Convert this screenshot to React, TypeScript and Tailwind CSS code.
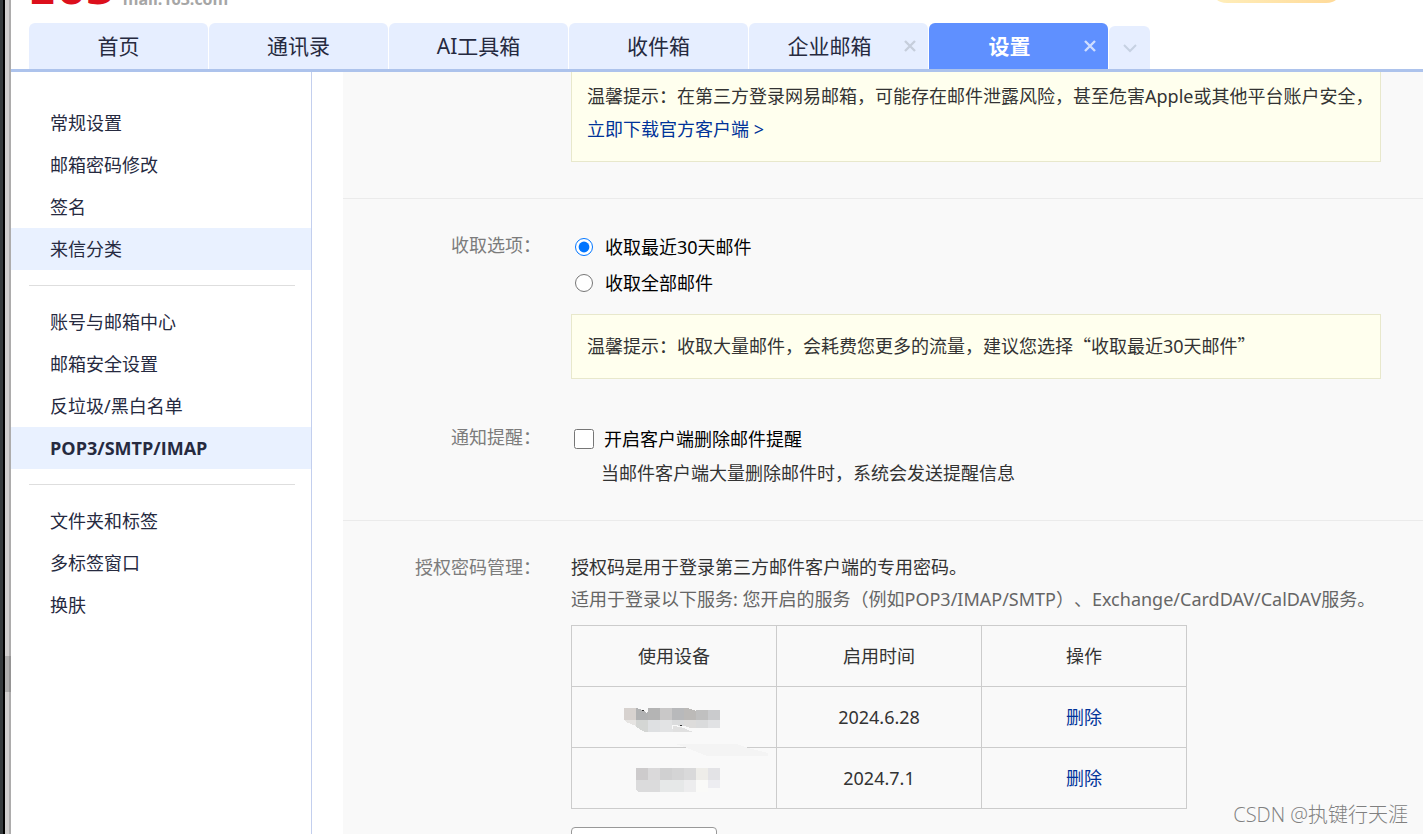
import type { ReactNode } from 'react';

type Tab = { name: string; closable?: boolean; active?: boolean };

const tabs: Tab[] = [
  { name: '首页' },
  { name: '通讯录' },
  { name: 'AI工具箱' },
  { name: '收件箱' },
  { name: '企业邮箱', closable: true },
  { name: '设置', closable: true, active: true },
];

const menu = [
  ['常规设置', '邮箱密码修改', '签名', '来信分类'],
  ['账号与邮箱中心', '邮箱安全设置', '反垃圾/黑白名单', 'POP3/SMTP/IMAP'],
  ['文件夹和标签', '多标签窗口', '换肤'],
];

function menuStyle(item: string) {
  if (item === 'POP3/SMTP/IMAP') return "bg-[#e9f1ff] font-['Open_Sans',sans-serif] font-bold";
  if (item === '来信分类') return 'bg-[#e9f1ff]';
  return '';
}

function TabItem({ tab }: { tab: Tab }) {
  return (
    <div
      className={`flex h-[46px] w-[179px] items-center rounded-t-md ${
        tab.active ? 'bg-[#5f90ff] font-bold text-white' : 'bg-[#e6eeff] text-[#262a3f]'
      }`}
    >
      <button type="button" className={`h-full flex-1 pt-px text-[21px] ${tab.closable ? 'pl-[6px]' : ''}`}>
        {tab.name}
      </button>
      {tab.closable && (
        <button
          type="button"
          aria-label="关闭"
          className={`mr-3 ${tab.active ? 'text-[#cfddff]' : 'text-[#c6cedc]'}`}
        >
          <svg width="12" height="12" viewBox="0 0 12 12" stroke="currentColor" strokeWidth="2.4">
            <path d="M1 1l10 10M11 1L1 11" />
          </svg>
        </button>
      )}
    </div>
  );
}

function Row({ label, children }: { label: string; children: ReactNode }) {
  return (
    <div className="flex gap-[30px] pr-[42px]">
      <div className="w-[198px] shrink-0 text-right leading-8 text-[#7c7c7c]">{label}</div>
      <div className="min-w-0 flex-1">{children}</div>
    </div>
  );
}

function Mosaic() {
  return (
    <svg className="inline-block overflow-visible" width="100" height="30" viewBox="0 0 100 30" shapeRendering="crispEdges">
      <path fill="#d7d2cf" d="M0 6h12v12H0z" />
      <path fill="#b1b2b3" d="M12 6l7 2 3 3 2-1v8H12z" />
      <path fill="#b4b4b4" d="M24 6h12v12H24z" />
      <path fill="#c9c8c8" d="M36 6h12v12H36z" />
      <path fill="#b8b9bb" d="M48 6h12v12H48z" />
      <path fill="#bcbab8" d="M60 6h4l8 3v9H60z" />
      <path fill="#c0c0c0" d="M72 8h12v10H72z" />
      <path fill="#cacbcd" d="M84 8h12v10H84z" />
      <path fill="#e6e4e2" d="M0 18h12v6L2 20z" />
      <path fill="#d4d6d4" d="M12 18h12v12h-3l-9-5z" />
      <path fill="#dee0e2" d="M24 18h12v12H24z" />
      <path fill="#e2e3e4" d="M36 18h12v5l1 7H36z" />
      <path fill="#e0e0e0" d="M49 24l8 1 12 5H49z" />
      <path fill="#dbdcdd" d="M48 18h12v6l-12-1z" />
      <path fill="#dddcdb" d="M60 18h12v8H66l-6-2z" />
      <path fill="#dadbdc" d="M72 18h12v8H72z" />
      <path fill="#e1e2e4" d="M84 18h12v8H84z" />
      <path fill="#333" d="M18 8h2v1h-2zM56 23h2v1h-2z" />
      <path fill="#f4f4f4" d="M51 42h61l12 4 20 5v3H83l-20-8z" />
    </svg>
  );
}

function MosaicSmall() {
  return (
    <svg className="inline-block" width="100" height="30" viewBox="0 0 100 30" shapeRendering="crispEdges">
      <path fill="#cdcbcc" d="M12 5h12v12H12z" />
      <path fill="#dad9da" d="M24 5h12v12H24z" />
      <path fill="#d0d0d1" d="M36 5h12v12H36z" />
      <path fill="#d4d4d5" d="M48 5h12v12H48z" />
      <path fill="#d9d9da" d="M60 5h12v12H60z" />
      <path fill="#eeede9" d="M72 5h12v12H72z" />
      <path fill="#e3e3e6" d="M84 5h12v12H84z" />
      <path fill="#dbdbdc" d="M12 17h24v12H14l-2-2z" />
      <path fill="#e6e8e8" d="M36 17h24v12H36z" />
      <path fill="#ededee" d="M60 17h12v12H60z" />
      <path fill="#fafaf8" d="M72 17h12v12H72z" />
      <path fill="#ededf1" d="M84 17h12v8H84z" />
    </svg>
  );
}

const devices = [
  { id: 1, picture: <Mosaic />, date: '2024.6.28' },
  { id: 2, picture: <MosaicSmall />, date: '2024.7.1' },
];

export default function App() {
  return (
    <div className="relative flex h-screen overflow-hidden bg-white font-['Noto_Sans','Noto_Sans_CJK_SC',sans-serif] text-[18px] text-[#333] [text-spacing-trim:space-all]">
      <div className="flex w-[11px] shrink-0">
        <div className="w-[3px] bg-[#34393b]" />
        <div className="w-[2px] bg-black" />
        <div className="flex w-1 flex-col bg-[#d1cfce]">
          <div className="mt-[656px] h-9 bg-[#b0afae]" />
        </div>
        <div className="flex w-[2px] flex-col bg-[#adacac]">
          <div className="mt-[656px] h-9 bg-[#959494]" />
        </div>
      </div>

      <div className="flex min-w-0 flex-1 flex-col">
        <header className="shrink-0 border-b-[3px] border-[#adc3ec]">
          <div className="flex h-[23px] items-start justify-between pr-[79px] pl-4">
            <div className="flex h-[6px] items-end gap-2 overflow-hidden">
              <span className="-mb-2 font-['DejaVu_Sans'] text-[42px] leading-[48px] font-bold text-[#dc0f1c]">
                163
              </span>
              <span className="-mb-[5px] font-['Open_Sans',sans-serif] text-[16px] leading-6 font-bold text-[#a6a6a6]">
                mail.163.com
              </span>
            </div>
            <div className="flex h-[3px] items-end overflow-hidden">
              <div className="h-9 w-[135px] shrink-0 rounded-full bg-linear-to-r from-[#ffefbc] to-[#ffd997]" />
            </div>
          </div>
          <nav className="flex items-end gap-px pl-[18px]">
            {tabs.map((tab) => (
              <TabItem key={tab.name} tab={tab} />
            ))}
            <button
              type="button"
              aria-label="更多"
              className="flex h-[43px] w-[41px] items-center justify-center rounded-t-md bg-[#e6eeff] text-[#c6d1e2]"
            >
              <svg width="14" height="10" viewBox="0 0 14 10" fill="none" stroke="currentColor" strokeWidth="2">
                <path d="M1 2l6 6 6-6" />
              </svg>
            </button>
          </nav>
        </header>

        <div className="flex min-h-0 flex-1">
          <aside className="w-[301px] shrink-0 border-r border-[#c3cfee] pt-[30px] text-[#262a3f]">
            {menu.map((group, index) => (
              <div key={group[0]}>
                {index > 0 && <hr className="my-[15px] mr-4 ml-[18px] border-[#dedede]" />}
                <ul>
                  {group.map((item) => (
                    <li key={item}>
                      <a href="#" className={`block pl-[39px] leading-[42px] ${menuStyle(item)}`}>
                        {item}
                      </a>
                    </li>
                  ))}
                </ul>
              </div>
            ))}
          </aside>

          <main className="ml-[31px] min-w-0 flex-1 overflow-hidden bg-[#f9f9f9]">
            <section className="border-b border-[#ebebeb] pb-9">
              <Row label="">
                <div className="border border-t-0 border-[#e8e8cc] bg-[#ffffee] px-[15px] pt-2 pb-[15px] leading-[33px] whitespace-nowrap">
                  <p>温馨提示：在第三方登录网易邮箱，可能存在邮件泄露风险，甚至危害Apple或其他平台账户安全，</p>
                  <a href="#" className="block text-[#003399]">
                    立即下载官方客户端 &gt;
                  </a>
                </div>
              </Row>
            </section>

            <section className="border-b border-[#ebebeb] pt-[30px] pb-[31px]">
              <Row label="收取选项：">
                <label className="flex h-9 items-center gap-3 pl-1 text-black">
                  <input type="radio" name="range" defaultChecked className="size-[18px] accent-[#0075ff]" />
                  收取最近30天邮件
                </label>
                <label className="flex h-9 items-center gap-3 pl-1 text-black">
                  <input type="radio" name="range" className="size-[18px] accent-[#0075ff]" />
                  收取全部邮件
                </label>
                <p className="mt-[13px] border border-[#e8e8cc] bg-[#ffffee] p-[15px] leading-[33px] whitespace-nowrap">
                  温馨提示：收取大量邮件，会耗费您更多的流量，建议您选择
                  <span className="font-['Noto_Sans_CJK_SC',sans-serif] leading-none">“</span>
                  收取最近30天邮件
                  <span className="font-['Noto_Sans_CJK_SC',sans-serif] leading-none">”</span>
                </p>
              </Row>
              <div className="mt-[42px]">
                <Row label="通知提醒：">
                  <label className="flex h-9 items-center gap-[10px] pl-[3px] text-black">
                    <input type="checkbox" className="size-5" />
                    开启客户端删除邮件提醒
                  </label>
                  <p className="pl-[30px] leading-8">当邮件客户端大量删除邮件时，系统会发送提醒信息</p>
                </Row>
              </div>
            </section>

            <section className="pt-[30px]">
              <Row label="授权密码管理：">
                <p className="leading-8">授权码是用于登录第三方邮件客户端的专用密码。</p>
                <p className="leading-8 whitespace-nowrap text-[#666]">
                  适用于登录以下服务: 您开启的服务（例如POP3/IMAP/SMTP）、Exchange/CardDAV/CalDAV服务。
                </p>
                <table className="mt-[10px] w-[616px] table-fixed border-collapse text-center">
                  <thead>
                    <tr className="h-[61px]">
                      {['使用设备', '启用时间', '操作'].map((head) => (
                        <th key={head} className="border border-[#ccc] p-0 font-normal">
                          {head}
                        </th>
                      ))}
                    </tr>
                  </thead>
                  <tbody>
                    {devices.map((device) => (
                      <tr key={device.id} className="h-[61px]">
                        <td className="border border-[#ccc] p-0">{device.picture}</td>
                        <td className="border border-[#ccc] p-0">{device.date}</td>
                        <td className="border border-[#ccc] p-0">
                          <a href="#" className="text-[#003399]">
                            删除
                          </a>
                        </td>
                      </tr>
                    ))}
                  </tbody>
                </table>
                <button
                  type="button"
                  aria-label="新增授权密码"
                  className="mt-[18px] block h-9 w-[146px] rounded-sm border border-[#999] bg-white"
                />
              </Row>
            </section>
          </main>
        </div>
      </div>

      <div className="absolute right-[15px] bottom-1 font-['Open_Sans','Noto_Sans_CJK_SC',sans-serif] text-[20px] leading-[30px] font-light text-[#808080]">
        CSDN @执键行天涯
      </div>
    </div>
  );
}
